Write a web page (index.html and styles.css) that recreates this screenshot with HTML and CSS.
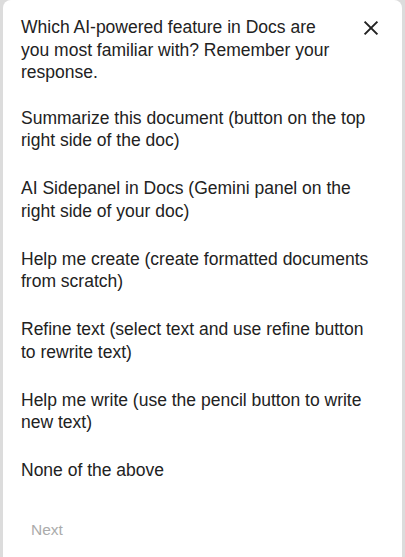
FILE: index.html
```html
<!DOCTYPE html>
<html>
<head>
<meta charset="utf-8">
<link rel="stylesheet" href="styles.css">
</head>
<body>
<div class="card">
  <div class="header">
    <div class="question">Which AI-powered feature in Docs are you most familiar with? Remember your response.</div>
    <button class="close" aria-label="Close">
      <svg width="16" height="16" viewBox="0 0 16 16"><path d="M1.6 1.6 L14.4 14.4 M14.4 1.6 L1.6 14.4" stroke="#222" stroke-width="2" fill="none"/></svg>
    </button>
  </div>
  <div class="options">
    <div class="option">Summarize this document (button on the top right side of the doc)</div>
    <div class="option">AI Sidepanel in Docs (Gemini panel on the right side of your doc)</div>
    <div class="option">Help me create (create formatted documents from scratch)</div>
    <div class="option">Refine text (select text and use refine button to rewrite text)</div>
    <div class="option">Help me write (use the pencil button to write new text)</div>
    <div class="option">None of the above</div>
  </div>
  <div class="footer">
    <button class="next">Next</button>
  </div>
</div>
</body>
</html>
```
FILE: styles.css
```css
html, body {
  margin: 0;
  padding: 0;
  height: 100%;
  background: #dcdcdc;
}
body {
  font-family: "Liberation Sans", Arial, sans-serif;
  color: #222;
}
.card {
  margin: 0 3px;
  min-height: 100%;
  box-sizing: border-box;
  background: #fff;
  border-radius: 8px 8px 0 0;
  padding: 16px 5px 0 18px;
}
.header {
  display: flex;
  align-items: flex-start;
  justify-content: space-between;
}
.question {
  width: 320px;
  font-size: 17.5px;
  line-height: 22.5px;
}
.close {
  border: none;
  background: none;
  padding: 0;
  margin: 4px 18px 0 0;
  width: 16px;
  height: 16px;
  display: flex;
}
.options {
  width: 355px;
  margin-top: 23px;
  display: flex;
  flex-direction: column;
  gap: 25.5px;
}
.option {
  font-size: 17.5px;
  line-height: 22.5px;
}
.footer {
  margin-top: 38.5px;
}
.next {
  border: none;
  background: none;
  font-family: "Liberation Sans", Arial, sans-serif;
  font-size: 15.5px;
  line-height: 20px;
  color: #ababab;
  padding: 0 0 0 10px;
}
```
